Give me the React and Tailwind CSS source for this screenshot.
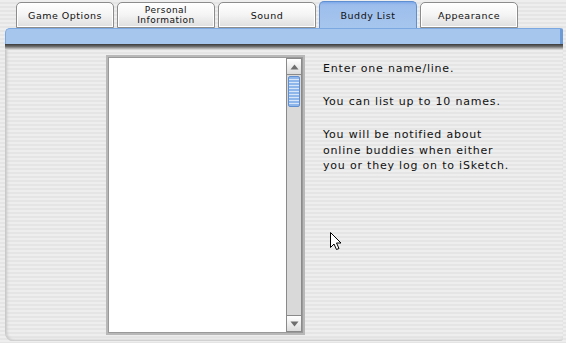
import React from "react";

const tabs = [
  { label: "Game Options" },
  { label: "Personal Information", two: true },
  { label: "Sound" },
  { label: "Buddy List", active: true },
  { label: "Appearance" },
];

const stripes =
  "bg-[repeating-linear-gradient(to_bottom,#eeeeee_0px,#eeeeee_2px,#e5e5e5_2px,#e5e5e5_4px)]";

const Tab = ({ label, two, active }) => (
  <div
    className={`w-[98px] rounded-t-[5px] border flex items-center justify-center text-center text-[9.5px] leading-[10px] tracking-[0.5px] text-[#111] ${
      active
        ? "h-[27px] pt-[2px] border-[#5f8fd0] border-b-0 bg-[linear-gradient(to_bottom,#7eaaea_0px,#9dbeec_3px,#a7c6ee_100%)]"
        : "h-[26px] pt-[2px] border-[#8c8c8c] bg-[linear-gradient(to_bottom,#ffffff_0%,#f4f4f4_50%,#dedede_100%)] shadow-[inset_0_0_0_1px_#ffffff]"
    }`}
  >
    {two ? (
      <span className="-mt-[2px] text-[9px] leading-[10px]">
        Personal
        <br />
        Information
      </span>
    ) : (
      label
    )}
  </div>
);

const Scrollbar = () => (
  <div className="w-[16px] h-full flex flex-col border border-[#8a8a8a] bg-[#d9d9d9]">
    <div className="h-[16px] border-b border-[#8a8a8a] bg-[linear-gradient(to_bottom,#ffffff,#dcdcdc)] flex items-center justify-center">
      <svg width="9" height="6" viewBox="0 0 9 6">
        <path d="M0.5 5.5 L4.5 0.5 L8.5 5.5 Z" fill="#6e6e6e" />
      </svg>
    </div>
    <div className="h-[31px] mx-[1px] mt-[1px] rounded-[2px] border border-[#5f8fd0] bg-[repeating-linear-gradient(to_bottom,#8fb6ea_0px,#8fb6ea_2px,#d6e5f8_2px,#d6e5f8_3px)]" />
    <div className="flex-1" />
    <div className="h-[16px] border-t border-[#8a8a8a] bg-[linear-gradient(to_bottom,#ffffff,#dcdcdc)] flex items-center justify-center">
      <svg width="9" height="6" viewBox="0 0 9 6">
        <path d="M0.5 0.5 L4.5 5.5 L8.5 0.5 Z" fill="#6e6e6e" />
      </svg>
    </div>
  </div>
);

export default function App() {
  return (
    <div
      className={`w-[566px] h-[343px] overflow-hidden flex flex-col ${stripes}`}
      style={{ fontFamily: '"DejaVu Sans", Verdana, sans-serif' }}
    >
      {/* Tabs */}
      <div className="flex items-end gap-[3px] pl-[16px] pt-[2px] h-[28px]">
        {tabs.map((t) => (
          <Tab key={t.label} {...t} />
        ))}
      </div>

      {/* Panel */}
      <div className="ml-[5px] mr-[3px] flex-1 flex flex-col mb-[2px]">
        <div className="h-[16px] rounded-tl-[5px] rounded-tr-[2px] border-t border-l border-r-[3px] border-t-[#7ca8e2] border-l-[#7ca8e2] border-r-[#6d9bd8] bg-[#a7c6ee]" />
        <div className="h-[6px] bg-[linear-gradient(to_bottom,#3a3a3a,#6a6a6a_40%,#bdbdbd_80%,#e4e4e4)]" />
        <div
          className={`flex-1 flex rounded-bl-[8px] rounded-br-[3px] border-l border-[#c9c9c9] shadow-[inset_3px_0_3px_-2px_#c8c8c8,inset_0_-3px_3px_-2px_#c8c8c8] ${stripes}`}
        >
          <div className="pl-[100px] pt-[5px] pb-[6px]">
            <div className="w-[199px] h-[280px] border-2 border-[#b8b8b8] bg-white flex justify-end pr-[1px] py-[1px] shadow-[inset_0_0_0_1px_#9a9a9a]">
              <Scrollbar />
            </div>
          </div>
          <div className="pl-[18px] pt-[11px] text-[11px] leading-[16px] tracking-[0.8px] text-[#111] relative flex-1">
            <p>Enter one name/line.</p>
            <p className="mt-[17px]">You can list up to 10 names.</p>
            <p className="mt-[17px] leading-[15.5px]">
              You will be notified about
              <br />
              online buddies when either
              <br />
              you or they log on to iSketch.
            </p>
            <svg
              className="absolute left-[25px] top-[182px]"
              width="12"
              height="19"
              viewBox="0 0 12 19"
            >
              <path
                d="M0.5 0.5 L0.5 15.5 L4 12 L6.5 17.5 L9 16.5 L6.5 11 L11 11 Z"
                fill="#ffffff"
                stroke="#000"
                strokeWidth="1"
              />
            </svg>
          </div>
        </div>
      </div>
    </div>
  );
}
